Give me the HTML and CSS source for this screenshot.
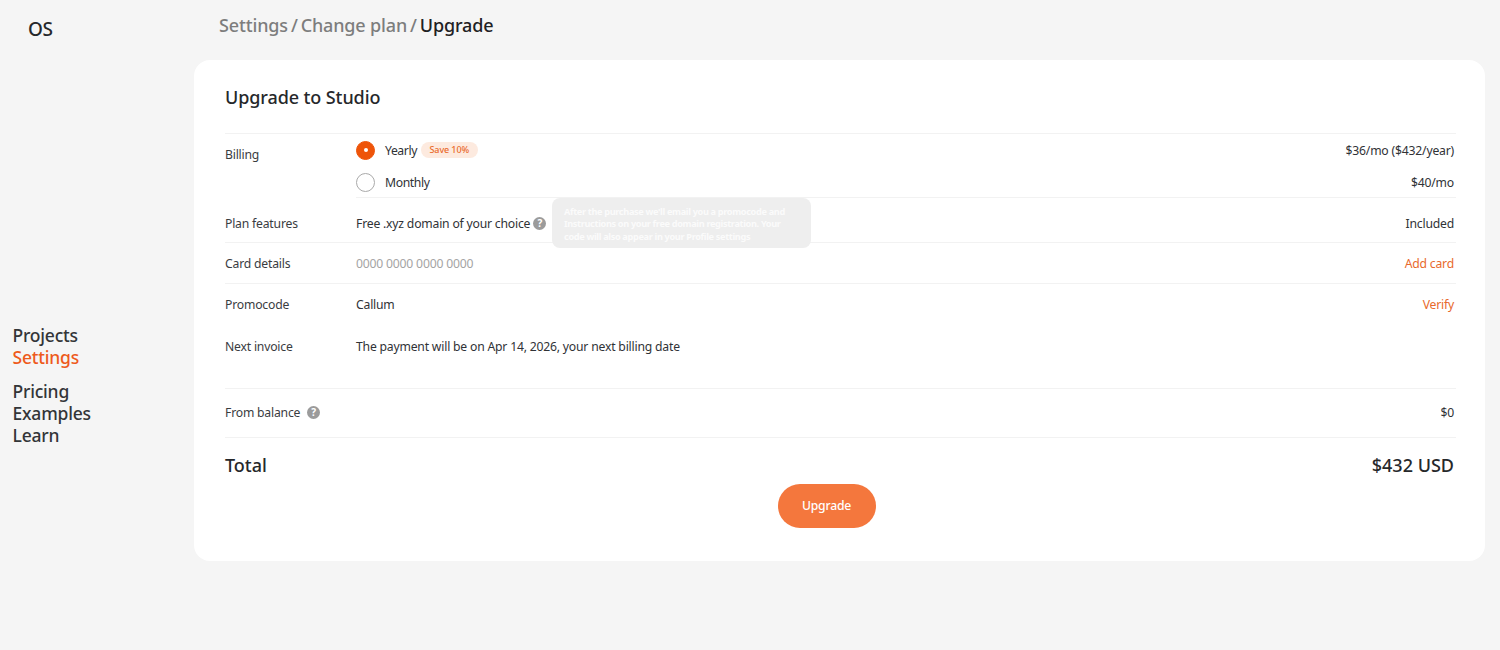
FILE: index.html
```html
<!DOCTYPE html>
<html lang="en">

<head>
    <meta charset="UTF-8">
    <title>Upgrade</title>
    <link rel="stylesheet" href="styles.css">
</head>

<body>
    <aside class="sidebar">
        <div class="logo">OS</div>
        <nav class="nav">
            <div class="nav-group">
                <a class="nav-link">Projects</a>
                <a class="nav-link active">Settings</a>
            </div>
            <div class="nav-group">
                <a class="nav-link">Pricing</a>
                <a class="nav-link">Examples</a>
                <a class="nav-link">Learn</a>
            </div>
        </nav>
    </aside>

    <main class="main">
        <div class="crumbs">
            <span class="crumb">Settings</span><span class="crumb-sep">/</span><span class="crumb">Change plan</span><span class="crumb-sep">/</span><span class="crumb current">Upgrade</span>
        </div>

        <section class="card">
            <h1 class="card-title">Upgrade to Studio</h1>

            <div class="billing">
                <div class="label">Billing</div>
                <div class="billing-options">
                    <div class="option">
                        <span class="radio checked"></span>
                        <span class="option-name">Yearly</span>
                        <span class="badge">Save 10%</span>
                        <span class="value">$36/mo ($432/year)</span>
                    </div>
                    <div class="option">
                        <span class="radio"></span>
                        <span class="option-name">Monthly</span>
                        <span class="value">$40/mo</span>
                    </div>
                </div>
            </div>

            <div class="row row-features">
                <div class="label">Plan features</div>
                <div class="content with-help">
                    <span>Free .xyz domain of your choice</span><span class="help">?</span>
                    <div class="tooltip">After the purchase we'll email you a promocode and<br>Instructions on your free domain registration. Your<br>code will also appear in your Profile settings</div>
                </div>
                <div class="value">Included</div>
            </div>

            <div class="row row-card">
                <div class="label">Card details</div>
                <div class="content placeholder">0000 0000 0000 0000</div>
                <a class="value link">Add card</a>
            </div>

            <div class="row row-promo">
                <div class="label">Promocode</div>
                <div class="content">Callum</div>
                <a class="value link">Verify</a>
            </div>

            <div class="row row-invoice">
                <div class="label">Next invoice</div>
                <div class="content">The payment will be on Apr 14, 2026, your next billing date</div>
            </div>

            <div class="balance">
                <div class="label with-help"><span>From balance</span><span class="help">?</span></div>
                <div class="value">$0</div>
            </div>

            <div class="total">
                <span>Total</span>
                <span>$432 USD</span>
            </div>

            <div class="actions">
                <button class="upgrade-btn">Upgrade</button>
            </div>
        </section>
    </main>
</body>

</html>
```

FILE: styles.css
```css
* {
    box-sizing: border-box;
}

body {
    margin: 0;
    height: 650px;
    display: flex;
    overflow: hidden;
    background: #f5f5f5;
    color: #303236;
    font-family: "Noto Sans", "Open Sans", sans-serif;
    font-size: 12.2px;
    letter-spacing: -0.2px;
}

.sidebar {
    width: 194px;
    flex-shrink: 0;
    padding: 16px 0 0 12.5px;
}

.logo {
    margin-left: 15.5px;
    font-size: 19px;
    line-height: 26px;
    font-weight: 500;
    letter-spacing: -0.5px;
    color: #26282b;
}

.nav {
    margin-top: 282px;
    display: flex;
    flex-direction: column;
    gap: 12px;
}

.nav-group {
    display: flex;
    flex-direction: column;
}

.nav-link {
    font-size: 17.5px;
    line-height: 22px;
    font-weight: 500;
    color: #333538;
}

.nav-link.active {
    color: #ee5a1c;
}

.main {
    width: 1291px;
}

.crumbs {
    height: 60px;
    padding: 12px 0 0 25px;
    font-size: 18px;
    line-height: 26px;
    font-weight: 500;
    color: #7d7d7d;
    letter-spacing: -0.15px;
}

.crumb-sep {
    margin: 0 3px;
}

.crumb.current {
    color: #1f2124;
}

.card {
    height: 501px;
    padding: 23px 29px 0 31px;
    background: #fff;
    border-radius: 16px;
}

.card-title {
    margin: 0 0 22px;
    font-size: 18px;
    line-height: 28px;
    font-weight: 500;
    letter-spacing: -0.1px;
    color: #26282b;
}

.label {
    width: 131px;
    flex-shrink: 0;
    color: #3a3c3f;
}

.value {
    margin-left: auto;
    padding-right: 2px;
}

.billing {
    display: flex;
    border-top: 1px solid #f2f2f2;
}

.billing .label {
    padding-top: 12px;
}

.billing-options {
    flex: 1;
    height: 64px;
    border-bottom: 1px solid #f2f2f2;
}

.option {
    height: 32px;
    display: flex;
    align-items: center;
}

.radio {
    width: 19px;
    height: 19px;
    margin-right: 10px;
    border-radius: 50%;
    border: 1px solid #aaa;
    display: flex;
    align-items: center;
    justify-content: center;
}

.radio.checked {
    background: #ee5409;
    border-color: #ee5409;
}

.radio.checked::after {
    content: "";
    width: 4px;
    height: 4px;
    border-radius: 50%;
    background: #fff;
}

.option-name {
    letter-spacing: -0.4px;
}

.badge {
    margin-left: 4px;
    padding: 0 8.5px;
    height: 16px;
    line-height: 16px;
    border-radius: 8px;
    background: #fdeadf;
    color: #ea6a2c;
    font-size: 9px;
    font-weight: 500;
    letter-spacing: -0.1px;
}

.row {
    display: flex;
    align-items: center;
    border-bottom: 1px solid #f2f2f2;
}

.row-features {
    height: 45px;
    padding-top: 6px;
}

.row-card {
    height: 41px;
}

.row-promo {
    height: 41px;
    border-bottom: 0;
}

.row-invoice {
    height: 41px;
    padding-top: 2px;
    border-bottom: 0;
}

.content {
    position: relative;
}

.with-help {
    display: flex;
    align-items: center;
}

.placeholder {
    color: #a4a4a4;
}

.link {
    color: #e8692c;
}

.help {
    display: flex;
    align-items: center;
    justify-content: center;
    width: 13px;
    height: 13px;
    margin-left: 3px;
    border-radius: 50%;
    background: #9b9b9b;
    color: #fff;
    font-size: 10px;
    font-weight: 700;
    letter-spacing: 0;
}

.tooltip {
    position: absolute;
    left: 196px;
    top: -17px;
    width: 259px;
    height: 50px;
    padding: 8px 12px;
    border-radius: 8px;
    background: #eee;
    color: #fbfbfb;
    font-size: 9.2px;
    line-height: 12.5px;
    font-weight: 700;
    letter-spacing: -0.35px;
    white-space: nowrap;
}

.balance {
    margin-top: 22px;
    height: 50px;
    padding-bottom: 2px;
    display: flex;
    align-items: center;
    border-top: 1px solid #f2f2f2;
    border-bottom: 1px solid #f2f2f2;
}

.balance .label {
    width: auto;
}

.balance .help {
    margin-left: 7px;
}

.total {
    height: 55px;
    padding: 0 2px 2px 0;
    display: flex;
    align-items: center;
    justify-content: space-between;
    font-size: 18px;
    font-weight: 500;
    letter-spacing: 0;
    color: #26282b;
}

.actions {
    display: flex;
    justify-content: center;
    margin-top: -9px;
    padding-right: 28px;
}

.upgrade-btn {
    width: 98px;
    height: 44px;
    padding-bottom: 2px;
    border: 0;
    border-radius: 22px;
    background: #f4773d;
    color: #fff;
    font-family: inherit;
    font-size: 12.2px;
    font-weight: 500;
    letter-spacing: -0.2px;
}
```
